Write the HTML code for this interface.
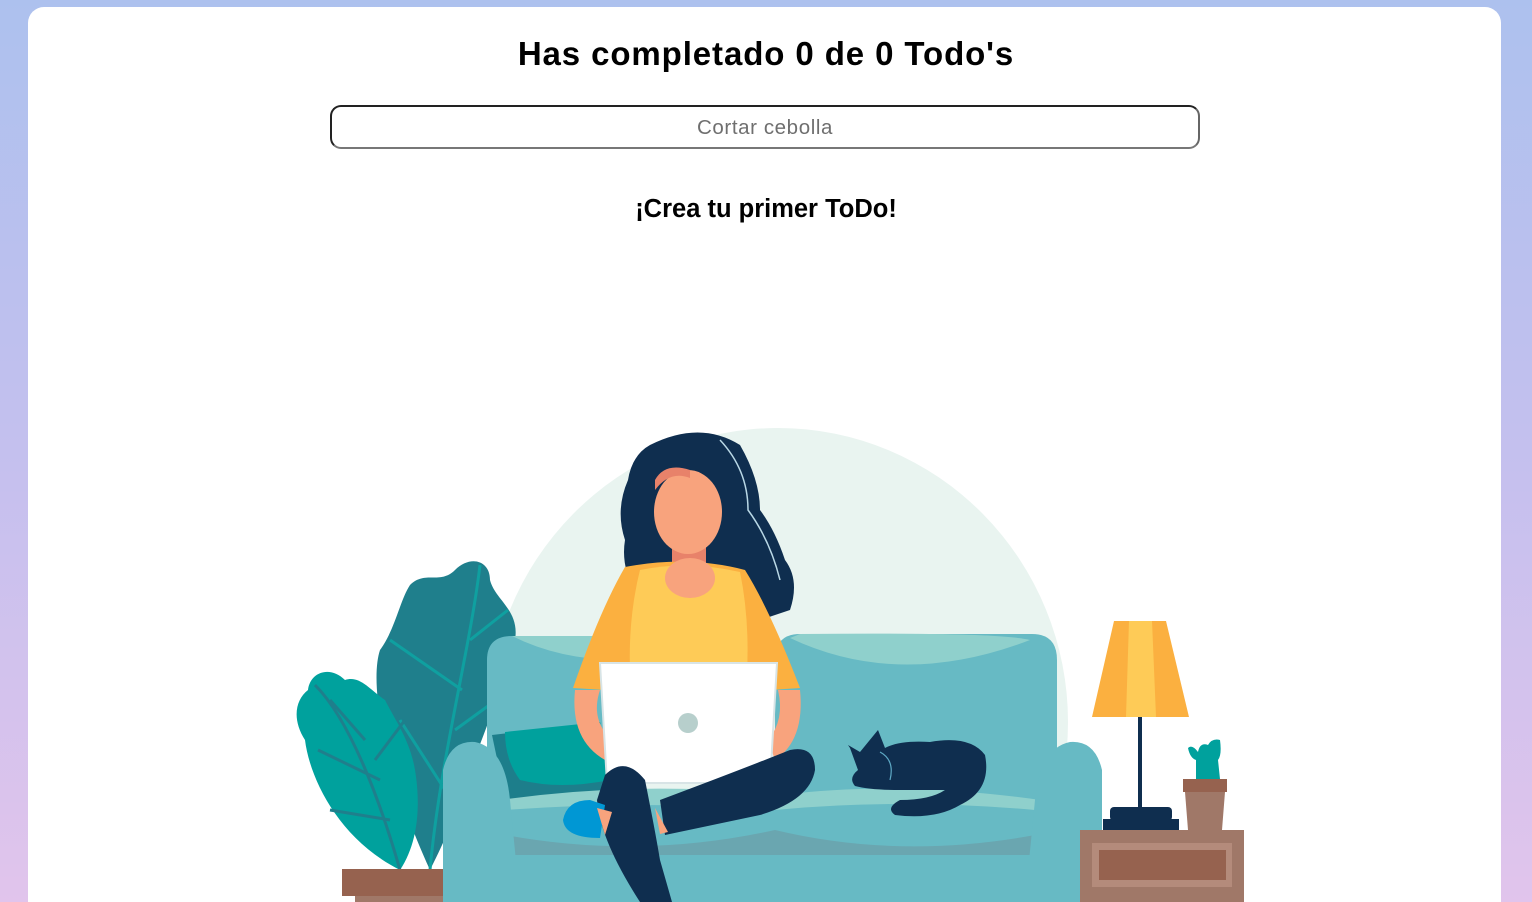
<!DOCTYPE html>
<html><head><meta charset="utf-8"><style>
html,body{margin:0;padding:0;width:1532px;height:902px;overflow:hidden}
body{background:linear-gradient(180deg,#adc1ee 0%,#c4c0ee 50%,#e1c4ec 100%);font-family:"Liberation Sans",sans-serif}
.card{position:absolute;left:28px;top:7px;width:1473px;height:895px;background:#fff;border-radius:16px 16px 0 0}
h1{position:absolute;left:0;width:1532px;top:35px;margin:0;text-align:center;font-size:33px;font-weight:bold;color:#000;letter-spacing:0.9px}
.inp{position:absolute;left:330px;top:105px;width:866px;height:40px;border:2px solid #222;border-bottom-color:#777;border-right-color:#666;border-radius:11px;text-align:center;line-height:42px;font-size:20.5px;color:#6f6f6f;letter-spacing:0.6px}
.sub{position:absolute;left:0;width:1532px;top:195px;text-align:center;font-size:25.5px;font-weight:bold;color:#000}
svg{position:absolute;left:0;top:0}
</style></head><body>
<div class="card"></div>
<h1>Has completado 0 de 0 Todo's</h1>
<div class="inp">Cortar cebolla</div>
<div class="sub">¡Crea tu primer ToDo!</div>
<svg width="1532" height="902" viewBox="0 0 1532 902">
<ellipse cx="778" cy="722" rx="290" ry="294" fill="#e9f4f0"/>
<path d="M430 870 C380 760 370 680 380 650 C395 630 400 600 410 585 C425 570 440 585 455 570 C470 555 490 560 490 580 C495 600 520 610 515 640 C500 690 490 720 470 770 C455 820 440 850 430 870Z" fill="#1f7f8c"/>
<path d="M430 870 C440 760 470 650 480 565 M445 790 L400 720 M455 730 L510 690 M462 690 L390 640 M470 640 L508 610" stroke="#0fa0a0" stroke-width="3" fill="none"/>
<path d="M400 870 C340 840 310 780 305 740 C292 720 295 700 308 690 C310 672 330 665 345 680 C360 675 370 690 385 700 C395 720 410 740 415 770 C420 800 420 840 400 870Z" fill="#00a19d"/>
<path d="M400 870 C380 800 350 720 315 685 M390 820 L330 810 M380 780 L318 750 M365 740 L330 700 M375 760 L405 720" stroke="#1f7f8c" stroke-width="3" fill="none"/>
<rect x="342" y="869" width="122" height="27" fill="#96624f"/><rect x="355" y="896" width="97" height="6" fill="#a07868"/>
<path d="M487 800 L487 660 Q487 636 512 636 L640 636 L640 800Z" fill="#67bac4"/>
<path d="M512 636 L630 636 L620 660 Q560 660 512 636Z" fill="#8fd0cc"/>
<path d="M775 800 L775 660 Q775 634 800 634 L1032 634 Q1057 634 1057 660 L1057 800Z" fill="#67bac4"/>
<path d="M790 638 Q900 690 1030 640 Q1000 632 800 634Z" fill="#8fd0cc"/>
<path d="M492 735 L600 722 L612 790 L507 806Z" fill="#1d7e8b"/>
<path d="M505 732 L600 722 L610 780 Q560 790 520 780 Q505 760 505 732Z" fill="#00a19d"/>
<path d="M500 800 Q640 780 780 795 Q900 780 1040 800 L1040 850 Q780 870 500 850Z" fill="#8fd0cc"/>
<path d="M505 810 Q640 800 775 810 Q900 798 1035 810 L1035 860 L505 860Z" fill="#67bac4"/>
<path d="M505 835 Q640 860 775 830 Q900 860 1035 835 L1035 858 L505 858Z" fill="#6aa6b0"/>
<path d="M443 902 L443 770 Q450 740 475 742 Q505 748 510 800 L520 902Z" fill="#67bac4"/>
<path d="M1102 902 L1102 770 Q1095 740 1070 742 Q1040 748 1035 800 L1025 902Z" fill="#67bac4"/>
<rect x="505" y="855" width="530" height="47" fill="#67bac4"/>
<path d="M650 445 Q700 420 740 445 Q760 480 760 510 Q775 530 785 560 Q800 580 790 610 L760 620 L640 600 Q620 570 625 540 Q615 510 628 480 Q632 455 650 445Z" fill="#0f2e4f"/>
<path d="M720 440 Q748 470 748 510 Q770 540 780 580" stroke="#b9d8e6" stroke-width="1.5" fill="none"/>
<rect x="672" y="540" width="34" height="40" fill="#e8826a"/>
<ellipse cx="688" cy="512" rx="34" ry="42" fill="#f8a37d"/>
<path d="M655 490 Q670 470 690 478 L690 470 Q665 462 655 480Z" fill="#e8826a"/>
<path d="M575 690 Q570 740 605 760 L612 740 Q590 720 600 690Z" fill="#f8a37d"/>
<path d="M800 690 Q805 740 775 760 L768 740 Q785 720 778 690Z" fill="#f8a37d"/>
<path d="M625 567 Q688 555 745 570 Q770 610 800 688 L770 690 L760 700 L615 700 L605 690 L573 688 Q600 610 625 567Z" fill="#fbb040"/>
<path d="M640 570 Q688 560 740 572 Q752 630 745 700 L632 700 Q625 630 640 570Z" fill="#fecb57"/>
<ellipse cx="690" cy="578" rx="25" ry="20" fill="#f8a37d"/>
<path d="M600 663 L777 663 L770 783 L607 783Z" fill="#fff" stroke="#d8e4e6" stroke-width="2"/>
<ellipse cx="688" cy="723" rx="10" ry="10" fill="#b7cfcc"/>
<path d="M660 800 Q740 770 790 750 Q815 745 815 770 Q810 800 760 815 L665 835Z" fill="#0f2e4f"/>
<path d="M605 775 Q625 755 645 780 Q655 830 660 860 L672 902 L640 902 Q600 840 597 800Z" fill="#0f2e4f"/>
<path d="M590 800 Q567 800 563 820 Q565 838 600 838 L605 805Z" fill="#0097d4"/>
<path d="M597 808 L605 835 L612 812Z" fill="#f8a37d"/>
<path d="M655 808 L668 832 L660 834 Z" fill="#f8a37d"/>
<path d="M850 748 L848 745 L860 752 L878 730 L885 748 Q900 740 930 742 Q970 735 985 755 Q992 790 960 805 Q935 820 895 815 Q885 808 900 800 Q930 800 945 790 L900 790 Q870 790 855 786 Q848 778 858 770Z" fill="#0f2e4f"/>
<path d="M880 752 Q895 760 890 780" stroke="#5da8c4" stroke-width="1.2" fill="none"/>
<path d="M1114 621 L1166 621 L1189 717 L1092 717Z" fill="#fbb040"/>
<path d="M1129 621 L1152 621 L1156 717 L1126 717Z" fill="#fecb57"/>
<rect x="1138" y="717" width="4" height="93" fill="#0f2e4f"/>
<rect x="1110" y="807" width="62" height="14" rx="4" fill="#0f2e4f"/>
<rect x="1103" y="819" width="76" height="11" fill="#0f2e4f"/>
<path d="M1196 779 L1196 760 Q1190 758 1188 748 Q1192 744 1198 752 Q1200 742 1208 745 Q1212 738 1220 740 Q1222 755 1218 760 L1220 779Z" fill="#00a19d"/>
<rect x="1183" y="779" width="44" height="13" fill="#96624f"/>
<path d="M1185 792 L1225 792 L1222 830 L1188 830Z" fill="#a07868"/>
<rect x="1080" y="830" width="164" height="72" fill="#a07868"/>
<rect x="1092" y="843" width="140" height="44" fill="#b48b7b"/>
<rect x="1099" y="850" width="127" height="30" fill="#96624f"/>
</svg>
</body></html>
